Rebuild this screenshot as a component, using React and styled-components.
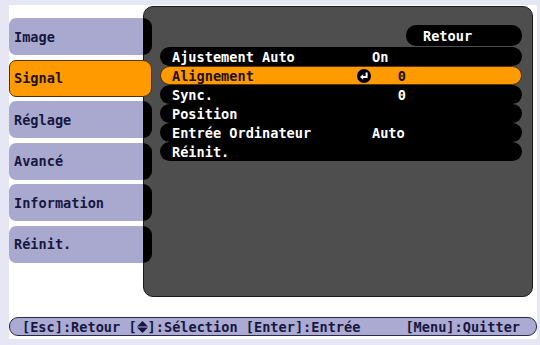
import React from "react";
import styled, { createGlobalStyle } from "styled-components";

const GlobalStyle = createGlobalStyle`
  html, body {
    margin: 0;
    padding: 0;
    background: #e6e6f5;
  }
  * {
    box-sizing: border-box;
  }
`;

const Screen = styled.div`
  width: 540px;
  height: 345px;
  padding: 5px 3px 6px 9px;
  font-family: "DejaVu Sans Mono", "Liberation Mono", monospace;
  font-weight: bold;
  font-size: 13.6px;
`;

const Frame = styled.div`
  height: 100%;
  background: #ffffff;
  display: flex;
  flex-direction: column;
`;

const Main = styled.div`
  display: flex;
  height: 291px;
  margin-top: 1px;
`;

const TabList = styled.div`
  width: 143px;
  margin-right: -9px;
  padding-top: 12px;
  display: flex;
  flex-direction: column;
  gap: 4.5px;
  position: relative;
  z-index: 1;
`;

const Tab = styled.div`
  height: 37px;
  display: flex;
  align-items: stretch;
  border-radius: 7px 9px 9px 7px;
  background: ${(p) => (p.$active ? "#ff9a00" : "transparent")};
  border: ${(p) => (p.$active ? "1px solid #5a3100" : "none")};
  color: ${(p) => (p.$active ? "#1e1100" : "#17173f")};
`;

const TabLabel = styled.div`
  flex: 1;
  display: flex;
  align-items: center;
  padding-left: ${(p) => (p.$active ? "4px" : "5px")};
  background: ${(p) => (p.$active ? "transparent" : "#a9a9cf")};
  border-radius: 7px 0 0 7px;
`;

const TabCap = styled.div`
  width: 9px;
  background: ${(p) => (p.$active ? "transparent" : "#000")};
  border-radius: 0 9px 9px 0;
`;

const Panel = styled.div`
  flex: 1;
  margin-right: 4px;
  background: #4e4e4e;
  border: 1px solid #1a1a1a;
  border-radius: 10px;
  padding: 18px 10px 0 16px;
  display: flex;
  flex-direction: column;
`;

const BackButton = styled.div`
  align-self: flex-end;
  width: 116px;
  height: 21px;
  background: #000;
  color: #fff;
  border-radius: 10px;
  display: flex;
  align-items: center;
  padding-left: 17px;
  margin-bottom: 1px;
`;

const Row = styled.div`
  height: 19px;
  display: grid;
  grid-template-columns: 185px 15px 34px;
  align-items: center;
  padding-left: ${(p) => (p.$active ? "11px" : "12px")};
  border-radius: 10px;
  background: ${(p) => (p.$active ? "#ff9a00" : "#000")};
  border: ${(p) => (p.$active ? "1.5px solid #5a3100" : "none")};
  color: ${(p) => (p.$active ? "#1e1100" : "#fff")};
`;

const Value = styled.span`
  text-align: ${(p) => (p.$num ? "right" : "left")};
`;

const Footer = styled.div`
  margin-top: 20px;
  height: 19px;
  border: 1px solid #2a2a48;
  border-radius: 9px;
  background: #aaaad2;
  color: #17173f;
  display: flex;
  align-items: center;
  justify-content: space-between;
  padding: 0 16px 0 12px;
  white-space: pre;
`;

const EnterIcon = () => (
  <svg width="14" height="14" viewBox="0 0 14 14">
    <circle cx="7" cy="7" r="7" fill="#000" />
    <path d="M9.6 3.4 V8 H5.5" stroke="#fff" strokeWidth="2" fill="none" />
    <path d="M3 8 L6.2 5.3 L6.2 10.7 Z" fill="#fff" />
  </svg>
);

const UpDown = () => (
  <svg width="11" height="12" viewBox="0 0 11 12" style={{ verticalAlign: "-1px" }}>
    <path d="M5.5 0 L11 5.4 L0 5.4 Z" fill="#17173f" />
    <path d="M0 6.6 L11 6.6 L5.5 12 Z" fill="#17173f" />
  </svg>
);

const tabs = ["Image", "Signal", "Réglage", "Avancé", "Information", "Réinit."];

const rows = [
  { label: "Ajustement Auto", value: "On" },
  { label: "Alignement", value: "0", num: true, active: true },
  { label: "Sync.", value: "0", num: true },
  { label: "Position" },
  { label: "Entrée Ordinateur", value: "Auto" },
  { label: "Réinit." },
];

export default function App() {
  return (
    <>
      <GlobalStyle />
      <Screen>
        <Frame>
          <Main>
            <TabList>
              {tabs.map((t) => {
                const active = t === "Signal";
                return (
                  <Tab key={t} $active={active}>
                    <TabLabel $active={active}>{t}</TabLabel>
                    <TabCap $active={active} />
                  </Tab>
                );
              })}
            </TabList>
            <Panel>
              <BackButton>Retour</BackButton>
              {rows.map((r) => (
                <Row key={r.label} $active={r.active}>
                  <span>{r.label}</span>
                  <span style={{ display: "flex" }}>{r.active && <EnterIcon />}</span>
                  <Value $num={r.num}>{r.value}</Value>
                </Row>
              ))}
            </Panel>
          </Main>
          <Footer>
            <span>
              [Esc]:Retour [<UpDown />]:Sélection [Enter]:Entrée
            </span>
            <span>[Menu]:Quitter</span>
          </Footer>
        </Frame>
      </Screen>
    </>
  );
}
